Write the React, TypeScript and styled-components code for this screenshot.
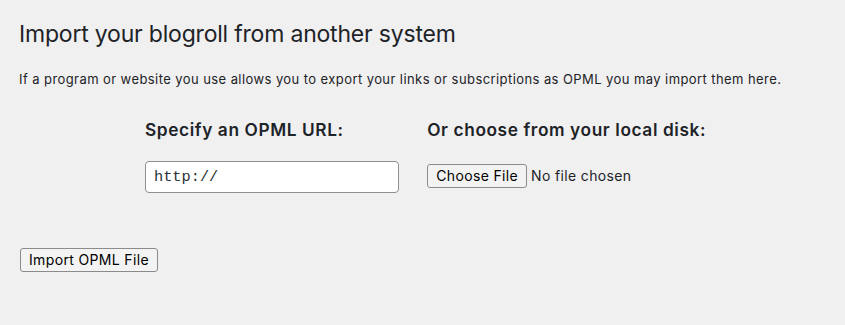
import React from "react";
import styled, { createGlobalStyle } from "styled-components";

const Global = createGlobalStyle`
  html, body { margin: 0; padding: 0; background: #f0f0f1; }
  body {
    font-family: Inter, "Liberation Sans", sans-serif;
    color: #1d2327;
    font-size: 13px;
    line-height: 1.4;
  }
`;

const Wrap = styled.div`
  padding: 0 20px 0 19px;
  width: 845px;
  height: 325px;
  box-sizing: border-box;
  overflow: hidden;
`;

const Title = styled.h2`
  margin: 0;
  padding-top: 20px;
  font-size: 23px;
  font-weight: 400;
  line-height: 29px;
  letter-spacing: -0.2px;
`;

const Intro = styled.p`
  margin: 21px 0 0;
  font-size: 13px;
  line-height: 1.5;
  letter-spacing: 0.42px;
`;

const Columns = styled.div`
  display: flex;
  width: 588px;
  height: 104px;
  margin: 28px 0 0 126px;
`;

const Column = styled.div`
  width: 48%;
`;

const Label = styled.label`
  display: block;
  font-size: 17.3px;
  font-weight: 600;
  line-height: 24px;
  letter-spacing: 0.6px;
  margin-bottom: 19px;
`;

const UrlInput = styled.input`
  box-sizing: border-box;
  width: 90%;
  height: 32px;
  margin: 0;
  padding: 0 8px;
  border: 1px solid #8c8f94;
  border-radius: 4px;
  background: #fff;
  color: #2c3338;
  font-family: "Liberation Mono", "DejaVu Sans Mono", monospace;
  font-size: 15.3px;
  outline: none;
`;

const FileRow = styled.div`
  display: flex;
  align-items: center;
  gap: 4px;
  padding-top: 3px;
`;

const NativeButton = styled.button`
  box-sizing: border-box;
  height: 24px;
  margin: 0;
  padding: 0 8px;
  border: 1px solid #8b8b8b;
  border-radius: 3px;
  background: #f3f3f3;
  color: #000;
  font-family: Inter, "Liberation Sans", sans-serif;
  font-size: 14px;
  line-height: 22px;
  letter-spacing: 0.35px;
  cursor: default;
`;

const FileStatus = styled.span`
  font-size: 14px;
  letter-spacing: 0.35px;
  color: #1d2327;
`;

const Submit = styled.div`
  margin-top: 26px;
  padding-left: 1px;
`;

export default function App() {
  return (
    <>
      <Global />
      <Wrap>
        <Title>Import your blogroll from another system</Title>
        <Intro>
          If a program or website you use allows you to export your links or subscriptions as OPML you may import them here.
        </Intro>
        <Columns>
          <Column>
            <Label htmlFor="opml_url">Specify an OPML URL:</Label>
            <UrlInput id="opml_url" type="text" defaultValue="http://" />
          </Column>
          <Column>
            <Label htmlFor="userfile">Or choose from your local disk:</Label>
            <FileRow>
              <NativeButton type="button" id="userfile">Choose File</NativeButton>
              <FileStatus>No file chosen</FileStatus>
            </FileRow>
          </Column>
        </Columns>
        <Submit>
          <NativeButton type="submit">Import OPML File</NativeButton>
        </Submit>
      </Wrap>
    </>
  );
}
